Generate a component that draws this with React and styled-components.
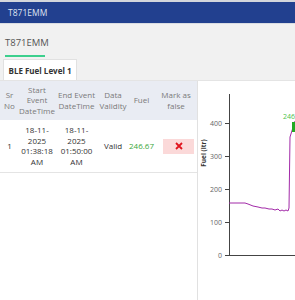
import React from "react";
import styled, { createGlobalStyle } from "styled-components";

const Global = createGlobalStyle`
  html, body { margin: 0; padding: 0; }
  * { box-sizing: border-box; }
  body {
    width: 295px; height: 300px; overflow: hidden;
    background: #f1f1f1;
    font-family: "Open Sans", "Noto Sans", sans-serif;
  }
`;

const Page = styled.div`
  display: flex; flex-direction: column; width: 295px; height: 300px;
  & > * { flex-shrink: 0; }
`;

const TopBar = styled.div`
  height: 24px; border-top: 2px solid #d3d6dc; border-bottom: 1px solid #d9dce2;
  background: #22408f; color: #dfe4f2; font-size: 8.5px;
  display: flex; align-items: center; padding-left: 8px;
`;

const TitleBlock = styled.div`
  display: flex; flex-direction: column; align-items: flex-start;
  padding: 11px 0 0 5px; height: 34px;
`;

const Title = styled.div`
  font-size: 9.5px; color: #555; line-height: 16px; padding: 0 0 4px 0;
  border-bottom: 2px solid #3ccf8d; width: 40px; white-space: nowrap;
`;

const TabRow = styled.div`
  display: flex; padding: 0 0 0 3px; height: 22px;
  align-items: flex-end;
`;

const Tab = styled.div`
  background: #fff; border: 1px solid #e1e1e1; border-bottom: none;
  font-size: 8px; font-weight: 700; color: #333; height: 21px;
  width: 74px; display: flex; align-items: center; justify-content: center;
`;

const Content = styled.div`
  flex: 1 1 auto !important; min-height: 0; display: flex; background: #fff;
  border-top: 1px solid #e4e4e4;
`;

const TablePanel = styled.div`
  width: 198px; border-right: 1px solid #e1e1e1; flex-shrink: 0;
`;

const Table = styled.table`
  border-collapse: collapse; width: 197px; table-layout: fixed;
`;

const Th = styled.th`
  background: #e9ecf3; color: #7a7a7a; font-weight: 400; font-size: 8px;
  line-height: 10.5px; padding: 3px 0; height: 39px; text-align: center;
`;

const Td = styled.td`
  font-size: 8px; line-height: 10.5px; text-align: center;
  padding: 5px 0; border-bottom: 1px solid #e4e4e4; height: 48px;
  color: ${p => p.$color || "#333"};
`;

const FalseBtn = styled.div`
  background: #fbd9d9; height: 15px; margin: 0 3px 0 8px;
  display: flex; align-items: center; justify-content: center;
`;

const ChartPanel = styled.div`
  flex: 1; overflow: hidden;
`;

const ChartSvg = styled.svg`
  display: block;
`;

const cols = [19, 36, 43, 30, 27, 42];

function Chart() {
  const ticks = [[0, 174], [100, 141], [200, 108], [300, 75], [400, 42]];
  return (
    <ChartSvg width="97" height="219" viewBox="0 0 97 219">
      <line x1="31.5" y1="13" x2="31.5" y2="174" stroke="#444" strokeWidth="1" />
      <line x1="31" y1="174.5" x2="97" y2="174.5" stroke="#444" strokeWidth="1" />
      {ticks.map(([v, y]) => (
        <g key={v}>
          <line x1="27" y1={y + 0.5} x2="31" y2={y + 0.5} stroke="#444" strokeWidth="1" />
          <text x="24" y={y + 2.5} fontSize="7" fill="#666" textAnchor="end"
            fontFamily="Open Sans, sans-serif">{v}</text>
        </g>
      ))}
      <text transform="translate(7.5 72) rotate(-90)" fontSize="6.5" fontWeight="700"
        fill="#333" textAnchor="middle" fontFamily="Open Sans, sans-serif">Fuel (ltr)</text>
      <polyline fill="none" stroke="#a22aa8" strokeWidth="1"
        points="31,122 47,122 50,123 55,125 60,126 64,127 67,127 71,128 74,128 77,129 80,128 82,130 84,129 86,130 88,129 90,130 91,127 92,56 97,40" />
      <rect x="94" y="41" width="8" height="10" fill="#22aa22" />
      <text x="85" y="38" fontSize="7" fill="#4cc24c" fontFamily="Open Sans, sans-serif">246.67</text>
    </ChartSvg>
  );
}

export default function App() {
  return (
    <Page>
      <Global />
      <TopBar>T871EMM</TopBar>
      <TitleBlock>
        <Title>T871EMM</Title>
      </TitleBlock>
      <TabRow>
        <Tab>BLE Fuel Level 1</Tab>
      </TabRow>
      <Content>
        <TablePanel>
          <Table>
            <colgroup>
              {cols.map((w, i) => <col key={i} style={{ width: w }} />)}
            </colgroup>
            <thead>
              <tr>
                <Th>Sr<br />No</Th>
                <Th>Start<br />Event<br />DateTime</Th>
                <Th>End Event<br />DateTime</Th>
                <Th>Data<br />Validity</Th>
                <Th>Fuel</Th>
                <Th>Mark as<br />false</Th>
              </tr>
            </thead>
            <tbody>
              <tr>
                <Td>1</Td>
                <Td>18-11-<br />2025<br />01:38:18<br />AM</Td>
                <Td>18-11-<br />2025<br />01:50:00<br />AM</Td>
                <Td>Valid</Td>
                <Td $color="#3aa83a">246.67</Td>
                <Td><FalseBtn>
                  <svg width="8" height="8" viewBox="0 0 8 8">
                    <path d="M1 1 L7 7 M7 1 L1 7" stroke="#e0141e" strokeWidth="1.8" />
                  </svg>
                </FalseBtn></Td>
              </tr>
            </tbody>
          </Table>
        </TablePanel>
        <ChartPanel>
          <Chart />
        </ChartPanel>
      </Content>
    </Page>
  );
}
